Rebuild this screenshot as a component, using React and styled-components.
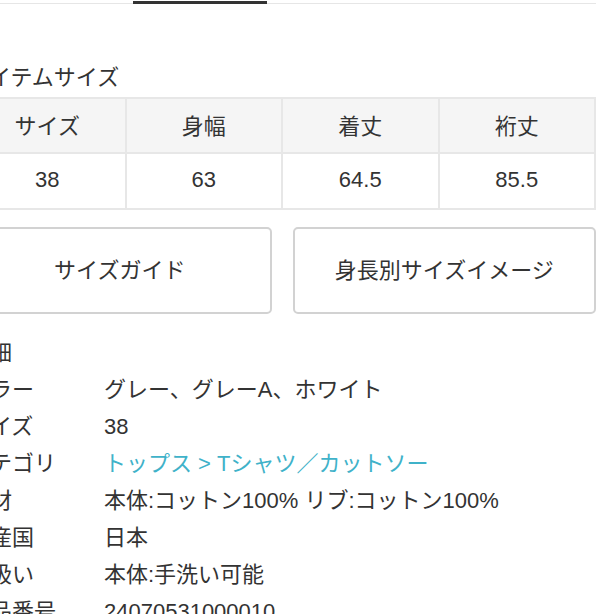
import React from "react";
import styled, { createGlobalStyle } from "styled-components";

const GlobalStyle = createGlobalStyle`
  html, body {
    margin: 0;
    padding: 0;
    background: #ffffff;
    overflow: hidden;
  }
  body {
    font-family: "Liberation Sans", "Noto Sans CJK JP", sans-serif;
    color: #333333;
  }
`;

// page is cropped: content starts 32px left of the viewport
const Page = styled.div`
  width: 628px;
  margin-left: -32px;
`;

const TabBar = styled.div`
  display: flex;
  height: 3px;
  padding-left: 31px;
  border-bottom: 1px solid #e6e6e6;
`;

const Tab = styled.div`
  width: 134px;
  height: 3px;
  margin-top: 1px;
  margin-bottom: -1px;
  background: ${({ active }) => (active ? "#333333" : "transparent")};
`;

const Heading = styled.h2`
  margin: ${({ top }) => top}px 0 0;
  font-size: 22px;
  font-weight: normal;
  line-height: 37px;
  color: #333333;
`;

const SizeTable = styled.div`
  display: grid;
  grid-template-columns: repeat(4, 1fr);
  gap: 2px;
  padding: 2px;
  margin-top: 1px;
  background: #e7e7e7;
`;

const Cell = styled.div`
  box-sizing: border-box;
  height: ${({ head }) => (head ? 53 : 54)}px;
  padding-bottom: ${({ head }) => (head ? 4 : 2)}px;
  display: flex;
  align-items: center;
  justify-content: center;
  font-size: 22px;
  background: ${({ head }) => (head ? "#f5f5f5" : "#ffffff")};
  color: #333333;
`;

const ButtonRow = styled.div`
  display: flex;
  gap: 21px;
  margin-top: 17px;
`;

const GuideButton = styled.button`
  flex: 1;
  height: 87px;
  padding: 0 0 6px;
  border: 2px solid #d2d2d2;
  border-radius: 5px;
  background: #ffffff;
  font-family: inherit;
  font-size: 22px;
  color: #333333;
  cursor: pointer;
`;

const Details = styled.dl`
  margin: 20px 0 0;
`;

const Row = styled.div`
  display: flex;
  font-size: 22px;
  line-height: 37px;
`;

const Label = styled.dt`
  width: 136px;
  flex-shrink: 0;
  white-space: nowrap;
`;

const Value = styled.dd`
  margin: 0;
  white-space: nowrap;
  color: ${({ link }) => (link ? "#3fb2c9" : "#333333")};
`;

const sizeHead = ["サイズ", "身幅", "着丈", "裄丈"];
const sizeBody = ["38", "63", "64.5", "85.5"];

const details = [
  { label: "カラー", value: "グレー、グレーA、ホワイト" },
  { label: "サイズ", value: "38" },
  { label: "カテゴリ", value: "トップス > Tシャツ／カットソー", link: true },
  { label: "素材", value: "本体:コットン100% リブ:コットン100%" },
  { label: "生産国", value: "日本" },
  { label: "取扱い", value: "本体:手洗い可能" },
  { label: "商品番号", value: "24070531000010" },
];

export default function App() {
  return (
    <>
      <GlobalStyle />
      <Page>
        <TabBar>
          <Tab />
          <Tab active />
          <Tab />
        </TabBar>

        <Heading top={55}>アイテムサイズ</Heading>
        <SizeTable>
          {sizeHead.map((h) => (
            <Cell head key={h}>
              {h}
            </Cell>
          ))}
          {sizeBody.map((v, i) => (
            <Cell key={i}>{v}</Cell>
          ))}
        </SizeTable>

        <ButtonRow>
          <GuideButton>サイズガイド</GuideButton>
          <GuideButton>身長別サイズイメージ</GuideButton>
        </ButtonRow>

        <Details>
          <Heading as="dt" top={0}>
            詳細
          </Heading>
          {details.map((d) => (
            <Row key={d.label}>
              <Label>{d.label}</Label>
              <Value link={d.link}>{d.value}</Value>
            </Row>
          ))}
        </Details>
      </Page>
    </>
  );
}
